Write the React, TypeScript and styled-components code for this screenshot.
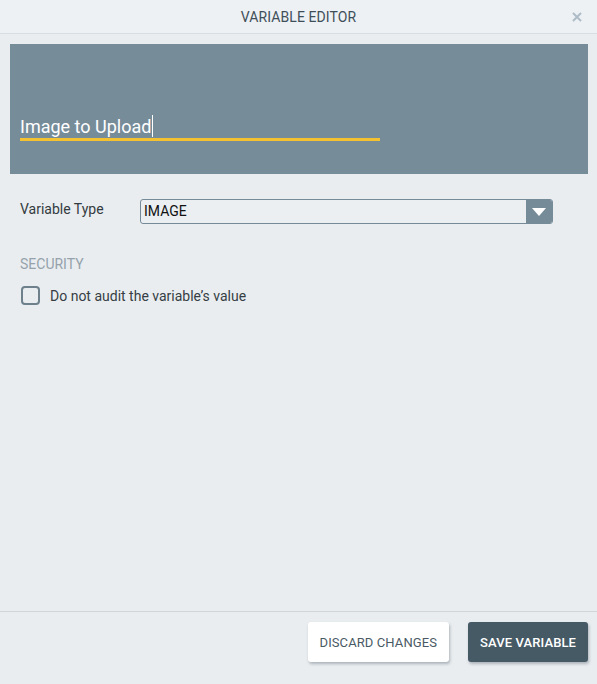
import React from 'react'
import styled, { createGlobalStyle } from 'styled-components'

const GlobalStyle = createGlobalStyle`
  html, body {
    margin: 0;
    padding: 0;
    background: #e9edf0;
    font-family: Roboto, "Liberation Sans", sans-serif;
  }
  * { box-sizing: border-box; }
`

const Dialog = styled.div`
  width: 597px;
  height: 684px;
  display: flex;
  flex-direction: column;
  background: #e9edf0;
`

const Header = styled.header`
  height: 34px;
  flex-shrink: 0;
  display: flex;
  align-items: center;
  justify-content: center;
  position: relative;
  background: #edf1f4;
  border-bottom: 1px solid #d8dde1;
  color: #3f4f59;
  font-size: 14px;
  letter-spacing: 0.1px;
`

const CloseButton = styled.button`
  position: absolute;
  right: 14px;
  top: 11px;
  width: 12px;
  height: 12px;
  padding: 0;
  border: none;
  background: transparent;
  display: flex;
  cursor: pointer;
`

const NameBanner = styled.section`
  margin: 10px 9px 0 10px;
  height: 130px;
  background: #778c99;
  padding: 0 10px;
  display: flex;
  flex-direction: column;
  justify-content: flex-end;
  padding-bottom: 33px;
`

const NameField = styled.div`
  width: 360px;
  border-bottom: 3px solid #f4c130;
  color: #ffffff;
  font-size: 18px;
  line-height: 22px;
  height: 25px;
  display: flex;
  align-items: flex-end;
`

const Caret = styled.span`
  display: inline-block;
  width: 1px;
  height: 22px;
  background: #ffffff;
  margin-left: 1px;
  margin-bottom: 1px;
`

const Body = styled.div`
  flex: 1;
  padding: 25px 20px 0 20px;
`

const FieldRow = styled.div`
  display: flex;
  align-items: flex-start;
`

const FieldLabel = styled.label`
  width: 120px;
  font-size: 14px;
  color: #333b40;
  padding-top: 2px;
`

const Select = styled.div`
  width: 413px;
  height: 25px;
  display: flex;
  border: 1px solid #768b98;
  border-radius: 3px;
  overflow: hidden;
  background: #ebeff2;
`

const SelectValue = styled.span`
  flex: 1;
  font-size: 14px;
  color: #111;
  padding-left: 3px;
  line-height: 23px;
`

const SelectArrow = styled.span`
  width: 26px;
  background: #768b98;
  display: flex;
  align-items: center;
  justify-content: center;
`

const SectionTitle = styled.h3`
  margin: 32px 0 0 0;
  font-size: 14px;
  font-weight: 400;
  color: #95a2ab;
  line-height: 16px;
`

const CheckRow = styled.label`
  display: flex;
  align-items: center;
  gap: 10px;
  margin-top: 14px;
  font-size: 14px;
  color: #363e44;
`

const Checkbox = styled.span`
  width: 19px;
  height: 19px;
  border: 2px solid #6d808c;
  border-radius: 4px;
  margin-left: 1px;
`

const Footer = styled.footer`
  height: 73px;
  flex-shrink: 0;
  border-top: 1px solid #cfd5d9;
  display: flex;
  justify-content: flex-end;
  align-items: flex-start;
  gap: 19px;
  padding: 10px 9px 0 0;
`

const Button = styled.button<{ $primary?: boolean }>`
  height: 40px;
  border: none;
  border-radius: 3px;
  font-family: Roboto, "Liberation Sans", sans-serif;
  font-size: 13px;
  letter-spacing: 0.1px;
  padding: 0 12px;
  cursor: pointer;
  background: ${p => (p.$primary ? '#465a66' : '#ffffff')};
  color: ${p => (p.$primary ? '#ffffff' : '#4a5a65')};
  font-weight: ${p => (p.$primary ? 500 : 400)};
  box-shadow: 1px 2px 3px rgba(60, 75, 85, 0.35);
`

export default function App() {
  return (
    <>
      <GlobalStyle />
      <Dialog>
        <Header>
          VARIABLE EDITOR
          <CloseButton aria-label="Close">
            <svg width="12" height="12" viewBox="0 0 12 12">
              <path d="M2 2L10 10M10 2L2 10" stroke="#aebcc6" strokeWidth="2" />
            </svg>
          </CloseButton>
        </Header>
        <NameBanner>
          <NameField>
            Image to Upload
            <Caret />
          </NameField>
        </NameBanner>
        <Body>
          <FieldRow>
            <FieldLabel>Variable Type</FieldLabel>
            <Select>
              <SelectValue>IMAGE</SelectValue>
              <SelectArrow>
                <svg width="14" height="8" viewBox="0 0 14 8">
                  <path d="M0 0H14L7 8Z" fill="#ffffff" />
                </svg>
              </SelectArrow>
            </Select>
          </FieldRow>
          <SectionTitle>SECURITY</SectionTitle>
          <CheckRow>
            <Checkbox />
            Do not audit the variable’s value
          </CheckRow>
        </Body>
        <Footer>
          <Button>DISCARD CHANGES</Button>
          <Button $primary>SAVE VARIABLE</Button>
        </Footer>
      </Dialog>
    </>
  )
}
